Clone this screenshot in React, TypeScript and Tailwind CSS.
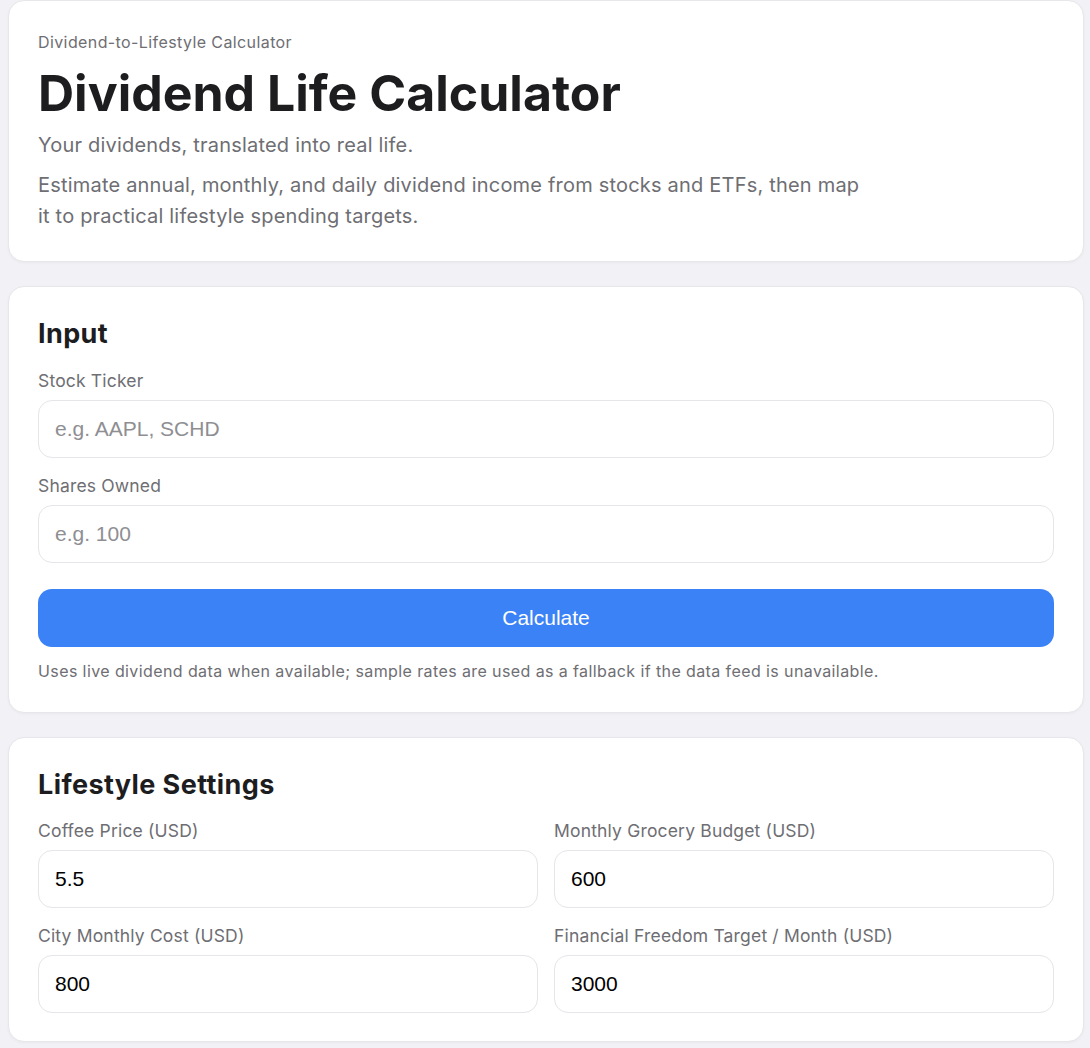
import React from 'react'

// Dividend Life Calculator — three stacked cards: intro, input, lifestyle settings.

const sans = "font-['Inter','Noto_Sans',sans-serif]"
const field = "font-['Liberation_Sans','Arial',sans-serif]"

function Card({ children, className = '' }: { children: React.ReactNode; className?: string }) {
  return (
    <section
      className={`rounded-2xl border border-[#e6e6eb] bg-white px-[29px] shadow-[0_1px_3px_rgba(0,0,0,0.04)] ${className}`}
    >
      {children}
    </section>
  )
}

function Field({ label, placeholder, value }: { label: string; placeholder?: string; value?: string }) {
  return (
    <label className="flex flex-col">
      <span className="text-[17.5px] leading-6 tracking-[0.01em] text-[#6e6e73]">{label}</span>
      <input
        defaultValue={value}
        placeholder={placeholder}
        className={`mt-[7px] h-[58px] w-full rounded-[14px] border border-[#e5e5ea] bg-white px-4 text-[21px] text-black outline-none placeholder:text-[#8e8e93] ${field}`}
      />
    </label>
  )
}

export default function App() {
  return (
    <div className={`min-h-screen bg-[#f2f2f6] pb-2 pl-2 pr-[6px] text-[#1d1d1f] ${sans}`}>
      <div className="flex flex-col gap-6">
        <Card className="pb-[29px] pt-[30px]">
          <p className="text-[16px] leading-[22px] tracking-[0.025em] text-[#6e6e73]">Dividend-to-Lifestyle Calculator</p>
          <h1 className="mt-3 text-[50px] font-bold leading-[56px] text-[#1d1d1f]">Dividend Life Calculator</h1>
          <p className="mt-[9px] text-[20px] leading-[30px] tracking-[0.01em] text-[#6e6e73]">
            Your dividends, translated into real life.
          </p>
          <p className="mt-[10px] max-w-[830px] text-[20px] leading-[31px] tracking-[0.01em] text-[#6e6e73]">
            Estimate annual, monthly, and daily dividend income from stocks and ETFs, then map it to practical lifestyle
            spending targets.
          </p>
        </Card>

        <Card className="pb-[30px] pt-[30px]">
          <h2 className="text-[27px] font-bold leading-[34px] tracking-[0.015em]">Input</h2>
          <div className="mt-[18px] flex flex-col gap-4">
            <Field label="Stock Ticker" placeholder="e.g. AAPL, SCHD" />
            <Field label="Shares Owned" placeholder="e.g. 100" />
          </div>
          <button
            className={`mt-[26px] h-[58px] w-full rounded-[14px] bg-[#3b82f6] text-[21px] text-white ${field}`}
          >
            Calculate
          </button>
          <p className="mt-[13px] text-[16px] leading-[22px] tracking-[0.025em] text-[#6e6e73]">
            Uses live dividend data when available; sample rates are used as a fallback if the data feed is unavailable.
          </p>
        </Card>

        <Card className="pb-[28px] pt-[30px]">
          <h2 className="text-[27px] font-bold leading-[34px] tracking-[0.015em]">Lifestyle Settings</h2>
          <div className="mt-[17px] grid grid-cols-2 gap-x-4 gap-y-4">
            <Field label="Coffee Price (USD)" value="5.5" />
            <Field label="Monthly Grocery Budget (USD)" value="600" />
            <Field label="City Monthly Cost (USD)" value="800" />
            <Field label="Financial Freedom Target / Month (USD)" value="3000" />
          </div>
        </Card>
      </div>
    </div>
  )
}
